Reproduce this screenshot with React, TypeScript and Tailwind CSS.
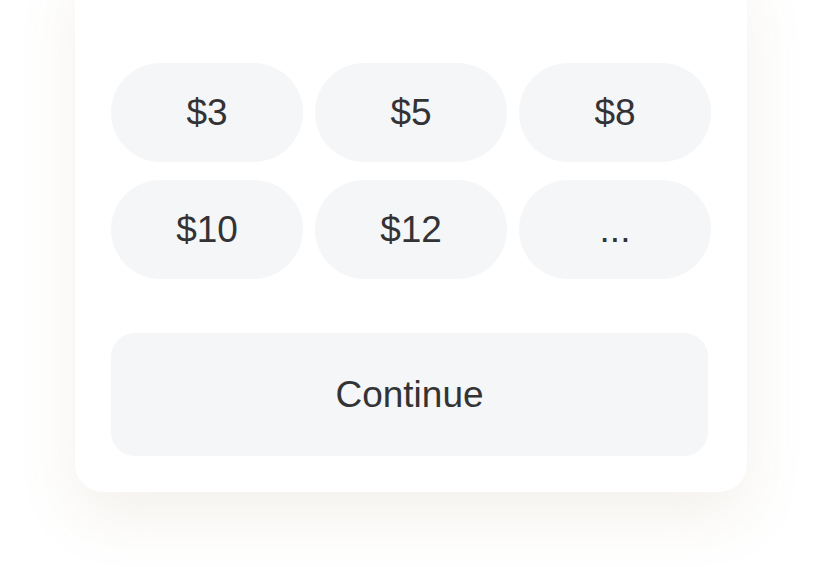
import React from "react";

const amounts = ["$3", "$5", "$8", "$10", "$12", "..."];

export default function App() {
  return (
    <div
      className="w-[822px] h-[567px] overflow-hidden bg-white flex justify-center"
      style={{ fontFamily: "'Liberation Sans', Arial, sans-serif" }}
    >
      <div className="w-[672px] -mt-[40px] h-fit bg-white rounded-[28px] px-[36px] pt-[103px] pb-[36px] shadow-[0_24px_60px_rgba(150,115,70,0.1)] flex flex-col">
        <div className="grid grid-cols-3 gap-x-[12px] gap-y-[18px]">
          {amounts.map((a) => (
            <button
              key={a}
              className="h-[99px] rounded-full bg-[#f5f6f8] text-[#333335] text-[37px] flex items-center justify-center"
            >
              {a}
            </button>
          ))}
        </div>
        <button className="mt-[54px] w-[597px] h-[123px] rounded-[24px] bg-[#f5f6f8] text-[#333335] text-[37px] flex items-center justify-center">
          Continue
        </button>
      </div>
    </div>
  );
}
